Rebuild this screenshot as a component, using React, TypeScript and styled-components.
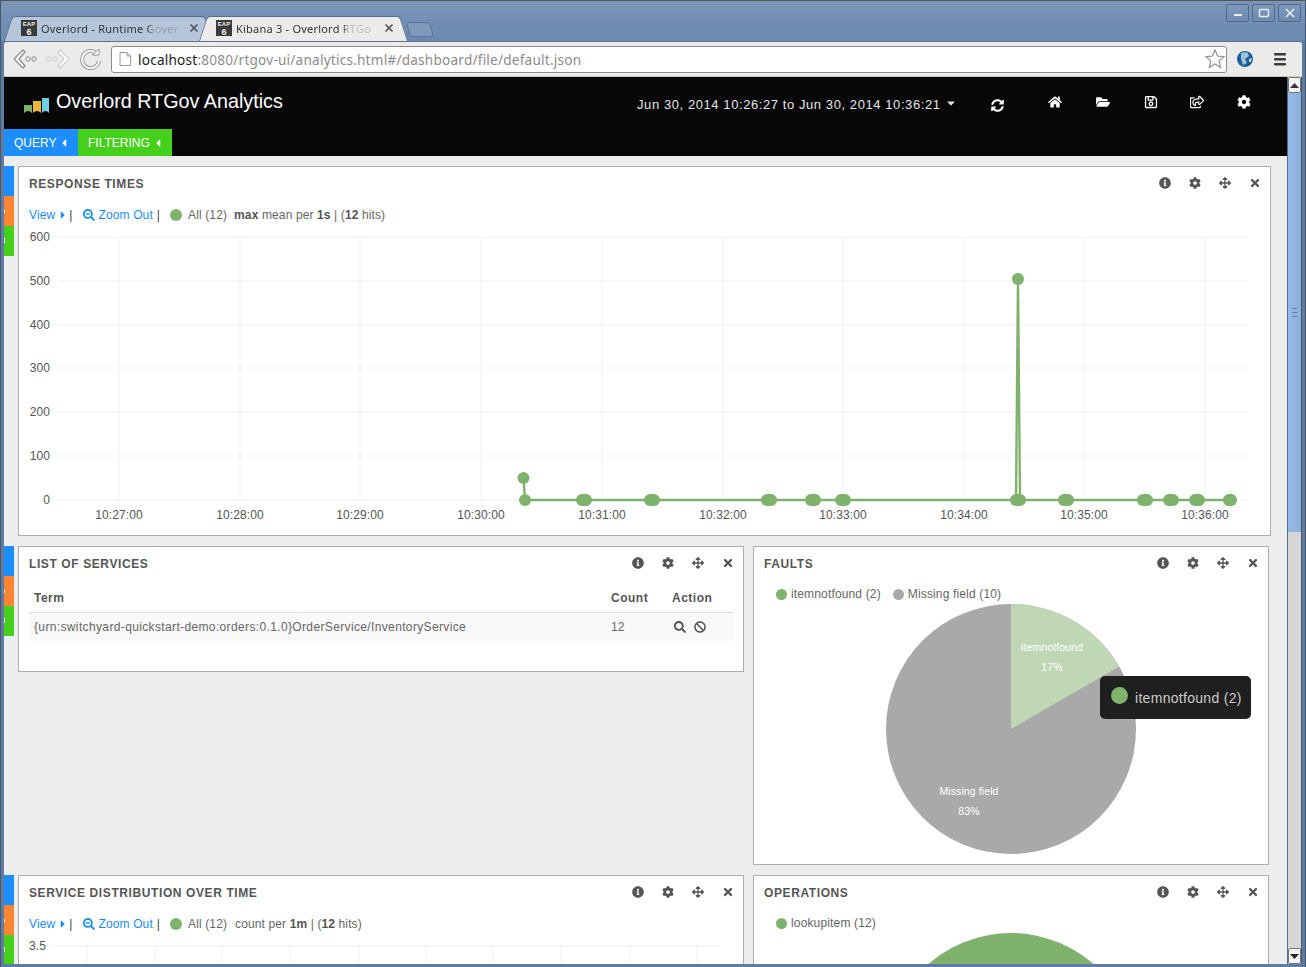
import React from "react";
import styled, { createGlobalStyle } from "styled-components";
import {
  FaInfoCircle, FaCog, FaArrowsAlt, FaTimes, FaSearchMinus, FaCaretRight, FaCaretLeft, FaCaretDown,
  FaSyncAlt, FaHome, FaFolderOpen, FaRegSave, FaRegShareSquare, FaSearch, FaBan,
} from "react-icons/fa";

const Global = createGlobalStyle`
  html, body { margin: 0; padding: 0; height: 100%; overflow: hidden; }
  body { font-family: "Liberation Sans", Arial, sans-serif; font-size: 12px; color: #555; }
  * { box-sizing: border-box; }
`;

const Win = styled.div`
  width: 1306px; height: 967px; display: flex; flex-direction: column;
  background: #5f7da3; border: 1px solid #47566b; border-top-color: #555; border-bottom: none;
  padding: 0 3px 3px 3px; overflow: hidden;
`;
const TitleBar = styled.div`
  height: 40px; margin: 0 -3px; padding: 0 3px; flex: none; display: flex; align-items: flex-end; position: relative;
  background: linear-gradient(#7a95b8, #6b89ae);
`;
const TabStrip = styled.div`
  display: flex; gap: 6px; align-items: flex-end; padding-left: 10px; flex: 1;
`;
const Tab = styled.div<{ $active?: boolean }>`
  position: relative; width: 189px; height: 25px; display: flex; align-items: center; padding: 0 4px 2px 7px;
  background: ${p => (p.$active ? "#ecebe9" : "#b6c6da")}; z-index: ${p => (p.$active ? 2 : 1)};
  border-top: 1px solid #566d8c; border-radius: 4px 4px 0 0;
  color: #333; font-family: "Noto Sans", sans-serif; font-size: 11px;
  &::before, &::after {
    content: ""; position: absolute; top: -1px; bottom: 0; width: 14px; background: inherit;
    border-top: 1px solid #566d8c;
  }
  &::before { left: -6px; transform: skewX(-18deg); border-left: 1px solid #566d8c; border-radius: 4px 0 0 0; z-index: -1; }
  &::after { right: -6px; transform: skewX(18deg); border-right: 1px solid #566d8c; border-radius: 0 4px 0 0; z-index: -1; }
`;
const Favicon = styled.span`
  width: 16px; height: 16px; flex: none; background: #3a3a3a; color: #eee; display: flex; flex-direction: column;
  align-items: center; font: bold 6px/7px "Liberation Sans", sans-serif; padding-top: 1px;
  b { font-size: 9px; line-height: 8px; }
`;
const TabText = styled.span`
  flex: 1; white-space: nowrap; margin-left: 4px; letter-spacing: .22px;
  mask-image: linear-gradient(to right, #000 72%, rgba(0,0,0,.25) 76%);
`;
const TabClose = styled.svg`
  flex: none; width: 10px; height: 10px;
`;
const NewTab = styled.div`
  width: 24px; height: 15px; margin: 0 0 4px 4px; background: #7d9abc; border: 1px solid #5a7496;
  border-radius: 3px 5px 3px 3px; transform: skewX(14deg);
`;
const WinButtons = styled.div`
  position: absolute; top: 3px; right: 4px; display: flex; gap: 3px;
`;
const WinBtn = styled.div`
  width: 23px; height: 18px; border: 1px solid #50698a; border-radius: 2px;
  background: linear-gradient(#7d98bb, #6d8bb0); display: flex; align-items: center; justify-content: center;
`;
const Toolbar = styled.div`
  height: 36px; flex: none; background: #ecebe9; display: flex; align-items: center;
  border-radius: 3px 3px 0 0; border-top: 1px solid #5a7496; border-bottom: 1px solid #c6c6c6;
  padding-left: 8px;
`;
const NavIcon = styled.svg<{ $flip?: boolean }>`
  width: 26px; height: 24px; flex: none; margin-right: 7px;
  transform: ${p => (p.$flip ? "scaleX(-1)" : "none")};
`;
const UrlBar = styled.div`
  width: 1116px; height: 27px; background: #fff; border: 1px solid #8a8a8a; border-radius: 3px;
  display: flex; align-items: center; padding: 0 1px 0 7px; font: 13.6px "Noto Sans", sans-serif; color: #8b8b8b;
  b { font-weight: 400; color: #222; }
`;
const UrlText = styled.span` flex: 1; margin-left: 7px; white-space: nowrap; letter-spacing: .22px; `;
const Globe = styled.svg` width: 18px; height: 18px; margin-left: 9px; flex: none; `;
const Menu = styled.svg` width: 14px; height: 14px; margin-left: 19px; flex: none; `;
const Body = styled.div` flex: 1; min-height: 0; display: flex; `;
const Page = styled.div`
  width: 1283px; background: #ededed; display: flex; flex-direction: column; overflow: hidden;
`;
const Scrollbar = styled.div`
  flex: 1; display: flex; flex-direction: column; background: #d6d6d6; border-left: 1px solid #4f6a8c; border-right: 1px solid #47566b;
`;
const ScrollBtn = styled.div`
  height: 16px; flex: none; background: #f4f4f4; border: 1px solid #777; border-radius: 2px; display: flex;
  align-items: center; justify-content: center;
`;
const Thumb = styled.div`
  height: 439px; flex: none; background: linear-gradient(to right, #97b9e6, #8cafdb); display: flex; align-items: center; justify-content: center;
  &::after {
    content: ""; width: 5px; height: 7px; border-top: 1px solid #5f7da3; border-bottom: 1px solid #5f7da3;
    background: linear-gradient(#5f7da3, #5f7da3) center / 100% 1px no-repeat;
  }
`;
const ScrollTrack = styled.div` flex: 1; `;
const TopBar = styled.div` background: #070707; height: 79px; flex: none; display: flex; flex-direction: column; `;
const BrandRow = styled.div` height: 52px; flex: none; display: flex; align-items: center; color: #fff; padding-left: 20px; `;
const Logo = styled.svg` width: 26px; height: 16px; flex: none; margin-top: 4px; `;
const Brand = styled.span` font-size: 19.75px; margin: -4px 0 0 6px; width: 581px; white-space: nowrap; `;
const TimeRange = styled.span`
  font-size: 13px; letter-spacing: .58px; white-space: nowrap; color: #e4e4e4; display: flex; align-items: center; gap: 4px;
  margin-top: 3px; width: 336px;
`;
const TimeCaret = styled(FaCaretDown)` margin-top: -3px; `;
const NavBtn = styled.span<{ $ml?: number; $mt?: number }>`
  width: 48px; flex: none; display: flex; justify-content: center; color: #fff; font-size: 14px;
  margin-left: ${p => p.$ml ?? 0}px; margin-top: ${p => p.$mt ?? -3}px;
`;
const SubRow = styled.div` height: 27px; display: flex; `;
const SubTab = styled.div<{ $bg: string; $w: number }>`
  width: ${p => p.$w}px; background: ${p => p.$bg}; color: #fff; display: flex; align-items: center; padding-left: 10px; gap: 2px; font-size: 12px;
`;
const Rows = styled.div` padding-top: 10px; display: flex; flex-direction: column; gap: 10px; `;
const Row = styled.div` display: flex; align-items: flex-start; `;
const Strips = styled.div` width: 10px; margin-right: 4px; flex: none; display: flex; flex-direction: column; `;
const Strip = styled.div<{ $c: string }>` height: 30px; background: ${p => p.$c}; position: relative; `;
const StripMark = styled.span<{ $t: number; $h: number }>`
  position: absolute; left: 0; top: ${p => p.$t}px; width: 1px; height: ${p => p.$h}px; background: #fff;
`;
const Panels = styled.div` display: flex; gap: 9px; `;
const Panel = styled.div<{ $w: number; $h: number }>`
  position: relative; width: ${p => p.$w}px; height: ${p => p.$h}px; background: #fff; border: 1px solid #adadad; flex: none; overflow: hidden;
`;
const PanelHead = styled.div` height: 33px; display: flex; align-items: center; justify-content: space-between; padding-left: 10px; `;
const Title = styled.h3`
  margin: 0; font-size: 12px; font-weight: bold; letter-spacing: .6px; color: #555; text-transform: uppercase;
`;
const Tools = styled.div` display: flex; color: #555; font-size: 12px; margin-top: -1px; `;
const Tool = styled.span` width: 30px; display: flex; justify-content: center; `;
const ChartLegend = styled.div`
  height: 28px; padding: 1px 0 0 10px; display: flex; align-items: center; white-space: nowrap; color: #666; font-size: 12px; letter-spacing: .12px;
  b { color: #555; }
`;
const Link = styled.span` color: #1a8cff; display: inline-flex; align-items: center; gap: 4px; `;
const Caret = styled(FaCaretRight)` margin-left: -2px; `;
const Sep = styled.span<{ $l: number; $m: number }>` margin: 0 ${p => p.$m}px 0 ${p => p.$l}px; color: #444; `;
const Dot = styled.span<{ $s: number; $c: string; $ml?: number }>`
  width: ${p => p.$s}px; height: ${p => p.$s}px; border-radius: 50%; background: ${p => p.$c}; flex: none; display: inline-block;
  margin-left: ${p => p.$ml ?? 0}px;
`;
const AllLabel = styled.span<{ $mr: number }>` margin: 0 ${p => p.$mr}px 0 6px; `;
const PieLegend = styled.div`
  height: 24px; padding: 4px 0 0 22px; display: flex; align-items: center; gap: 4px; color: #666; font-size: 12px; letter-spacing: .15px; white-space: nowrap;
`;
const Plot = styled.svg` display: block; `;
const AxisText = styled.text` font-size: 12px; fill: #555; font-family: "Liberation Sans", sans-serif; letter-spacing: .1px; `;
const SliceText = styled.text` font-size: 10.5px; fill: #fff; text-anchor: middle; letter-spacing: .1px; font-family: "Liberation Sans", sans-serif; `;
const Table = styled.table`
  border-collapse: collapse; margin: 0 10px; width: 704px; table-layout: fixed; font-size: 12px; color: #666;
`;
const Th = styled.th<{ $w: number }>`
  width: ${p => p.$w}px; text-align: left; font-weight: bold; color: #555; height: 32px; padding: 4px 0 0 5px; border-bottom: 1px solid #ddd; letter-spacing: .5px;
`;
const Td = styled.td<{ $wide?: boolean }>`
  height: 29px; background: #f9f9f9; padding: 1px 0 0 5px; white-space: nowrap; letter-spacing: ${p => (p.$wide ? ".36px" : "0")};
`;
const Actions = styled.span` display: flex; gap: 8px; color: #555; padding-left: 2px; font-size: 12px; `;
const Tooltip = styled.div`
  position: absolute; left: 346px; top: 129px; width: 151px; height: 43px; background: #1f1f1f; border-radius: 5px; color: #ccc;
  display: flex; align-items: center; gap: 7px; padding-left: 11px; font-size: 14px; letter-spacing: .3px; white-space: nowrap;
  ${Dot} { margin-bottom: 5px; }
`;

const C = { blue: "#1c8eff", orange: "#ff8533", green: "#45d11b", line: "#7eb26d", grid: "#f1f1f1" };

const Bars = () => (
  <Strips>
    <Strip $c={C.blue} />
    <Strip $c={C.orange}><StripMark $t={14} $h={3} /></Strip>
    <Strip $c={C.green}><StripMark $t={12} $h={5} /></Strip>
  </Strips>
);

const PanelTools = () => (
  <Tools>
    <Tool><FaInfoCircle /></Tool>
    <Tool><FaCog /></Tool>
    <Tool><FaArrowsAlt /></Tool>
    <Tool><FaTimes /></Tool>
  </Tools>
);

const HistoLegend = ({ label, per, gapMax }: { label: React.ReactNode; per: string; gapMax: number }) => (
  <ChartLegend>
    <Link>View <Caret size={12} /></Link>
    <Sep $l={0} $m={10}>|</Sep>
    <Link><FaSearchMinus size={12} /> Zoom Out</Link>
    <Sep $l={4} $m={10}>|</Sep>
    <Dot $s={12} $c={C.line} />
    <AllLabel $mr={gapMax}>All (12)</AllLabel>
    {label}
    <span>&nbsp;per <b>{per}</b> | (<b>12</b> hits)</span>
  </ChartLegend>
);

const mainVert = [119, 240, 360, 481, 602, 723, 843, 964, 1084, 1205];
const mainHoriz = [500, 456, 412, 368, 325, 281, 237];
const mainXLabels = ["10:27:00", "10:28:00", "10:29:00", "10:30:00", "10:31:00", "10:32:00", "10:33:00", "10:34:00", "10:35:00", "10:36:00"];
const pts = [525, 582, 584, 586, 650, 652, 654, 767, 769, 771, 811, 813, 815, 841, 843, 845, 1016, 1018, 1020, 1064, 1066, 1068, 1143, 1145, 1147, 1169, 1171, 1173, 1195, 1197, 1199, 1229, 1231];

const MainChart = () => (
  <Plot width={1251} height={307} viewBox="19 228 1251 307">
    {mainHoriz.map(y => <line key={y} x1={57} x2={1248} y1={y} y2={y} stroke={C.grid} />)}
    {mainVert.map(x => <line key={x} x1={x} x2={x} y1={237} y2={500} stroke={C.grid} />)}
    {mainHoriz.map((y, i) => <AxisText key={y} x={50} y={y + 4} textAnchor="end">{i * 100}</AxisText>)}
    {mainVert.map((x, i) => <AxisText key={x} x={x} y={519} textAnchor="middle">{mainXLabels[i]}</AxisText>)}
    <polyline fill="none" stroke={C.line} strokeWidth={2.4}
      points="523.5,478 525,500 1016,500 1018,279 1020,500 1230,500" />
    <circle cx={523.5} cy={478} r={6} fill={C.line} />
    <circle cx={1018} cy={279} r={6} fill={C.line} />
    {pts.map(x => <circle key={x} cx={x} cy={500} r={6} fill={C.line} />)}
  </Plot>
);

const smallVert = [87, 155, 222, 290, 359, 426, 493, 561, 630, 697];
const SmallChart = () => (
  <Plot width={724} height={60} viewBox="19 937 724 60">
    <line x1={51} x2={721} y1={946} y2={946} stroke={C.grid} />
    {smallVert.map(x => <line key={x} x1={x} x2={x} y1={946} y2={997} stroke={C.grid} />)}
    <AxisText x={46} y={950} textAnchor="end">3.5</AxisText>
  </Plot>
);

const FaultsPie = () => (
  <Plot width={514} height={260} viewBox="754 604 514 260">
    <circle cx={1011} cy={729} r={125} fill="#a9a9a9" />
    <path d="M1011 729 L1011 604 A125 125 0 0 1 1119.3 666.5 Z" fill="#bfd7b5" />
    <SliceText x={1052} y={651}>itemnotfound</SliceText>
    <SliceText x={1052} y={671}>17%</SliceText>
    <SliceText x={969} y={795}>Missing field</SliceText>
    <SliceText x={969} y={815}>83%</SliceText>
  </Plot>
);

const OpsPie = () => (
  <Plot width={514} height={60} viewBox="754 933 514 60">
    <circle cx={1011} cy={1058} r={125} fill={C.line} />
  </Plot>
);

const ChromeArrow = ({ flip, color }: { flip?: boolean; color: string }) => (
  <NavIcon viewBox="0 0 26 24" $flip={flip}>
    <path d="M11 3 L2 12 L11 21 L13 19 L7 12 L13 5 Z" fill="#fff" stroke={color} strokeWidth={1.2} strokeLinejoin="round" />
    <circle cx={16} cy={12} r={2.2} fill="none" stroke={color} />
    <circle cx={22} cy={12} r={2.2} fill="none" stroke={color} />
  </NavIcon>
);

const CloseX = () => (
  <TabClose viewBox="0 0 10 10"><path d="M1.5 1.5 L8.5 8.5 M8.5 1.5 L1.5 8.5" stroke="#555" strokeWidth="1.7" /></TabClose>
);

export default function App() {
  return (
    <>
      <Global />
      <Win>
        <TitleBar>
          <TabStrip>
            <Tab>
              <Favicon>EAP<b>6</b></Favicon>
              <TabText>Overlord - Runtime Gover</TabText>
              <CloseX />
            </Tab>
            <Tab $active>
              <Favicon>EAP<b>6</b></Favicon>
              <TabText>Kibana 3 - Overlord RTGo</TabText>
              <CloseX />
            </Tab>
            <NewTab />
          </TabStrip>
          <WinButtons>
            <WinBtn><svg width="12" height="12" viewBox="0 0 12 12"><rect x="2" y="7" width="8" height="2" fill="#e8edf3" /></svg></WinBtn>
            <WinBtn><svg width="12" height="12" viewBox="0 0 12 12"><rect x="1.5" y="2.5" width="9" height="7" rx="1" fill="none" stroke="#e8edf3" strokeWidth="1.4" /></svg></WinBtn>
            <WinBtn><svg width="12" height="12" viewBox="0 0 12 12"><path d="M2 2 L10 10 M10 2 L2 10" stroke="#e8edf3" strokeWidth="1.6" /></svg></WinBtn>
          </WinButtons>
        </TitleBar>
        <Toolbar>
          <ChromeArrow color="#8a8a8a" />
          <ChromeArrow flip color="#cfcfcf" />
          <NavIcon viewBox="0 0 26 24">
            <path d="M19 7 A8.5 8.5 0 1 0 21 14" fill="none" stroke="#9a9a9a" strokeWidth={4} />
            <path d="M19 7 A8.5 8.5 0 1 0 21 14" fill="none" stroke="#f6f6f6" strokeWidth={2} />
            <path d="M14 8 L21 8 L21 2 Z" fill="#f6f6f6" stroke="#9a9a9a" />
          </NavIcon>
          <UrlBar>
            <svg width="12" height="14" viewBox="0 0 12 14"><path d="M1 .5 H8 L11.5 4 V13.5 H1 Z M8 .5 V4 H11.5" fill="#fff" stroke="#999" /></svg>
            <UrlText><b>localhost</b>:8080/rtgov-ui/analytics.html#/dashboard/file/default.json</UrlText>
            <svg width="20" height="20" viewBox="0 0 20 20"><polygon points="10,1 12.6,7 19,7.6 14.2,11.9 15.6,18.5 10,15 4.4,18.5 5.8,11.9 1,7.6 7.4,7" fill="#fff" stroke="#8f8f8f" strokeWidth="1.2" /></svg>
          </UrlBar>
          <Globe viewBox="0 0 18 18">
            <circle cx="9" cy="9" r="8" fill="#1c5f96" />
            <path d="M5 3 L11 2 L13 6 L9 9 L11 13 L7 15 L5 9 Z" fill="#9fc3d8" />
            <path d="M13 9 L16 8 L15 12 L13 12 Z" fill="#b9d2e2" />
          </Globe>
          <Menu viewBox="0 0 14 14">
            <rect x="1" y="1" width="12" height="2.6" rx="1" fill="#3b3b3b" />
            <rect x="1" y="6" width="12" height="2.6" rx="1" fill="#3b3b3b" />
            <rect x="1" y="11" width="12" height="2.6" rx="1" fill="#3b3b3b" />
          </Menu>
        </Toolbar>
        <Body>
          <Page>
            <TopBar>
              <BrandRow>
                <Logo viewBox="0 0 26 16">
                  <path d="M0 8 H8 V16 Q4 12 0 16 Z" fill="#7eb26d" />
                  <path d="M9 4 H17 V16 Q13 12 9 16 Z" fill="#eab839" />
                  <path d="M18 1 H25 V16 Q21.5 12 18 16 Z" fill="#6ed0e0" />
                </Logo>
                <Brand>Overlord RTGov Analytics</Brand>
                <TimeRange>Jun 30, 2014 10:26:27 to Jun 30, 2014 10:36:21 <TimeCaret size={12} /></TimeRange>
                <NavBtn $mt={4}><FaSyncAlt size={13} /></NavBtn>
                <NavBtn $ml={10}><FaHome /></NavBtn>
                <NavBtn><FaFolderOpen /></NavBtn>
                <NavBtn><FaRegSave /></NavBtn>
                <NavBtn $ml={-2}><FaRegShareSquare /></NavBtn>
                <NavBtn $ml={-1}><FaCog /></NavBtn>
              </BrandRow>
              <SubRow>
                <SubTab $bg={C.blue} $w={74}>QUERY <FaCaretLeft size={12} /></SubTab>
                <SubTab $bg={C.green} $w={94}>FILTERING <FaCaretLeft size={12} /></SubTab>
              </SubRow>
            </TopBar>
            <Rows>
              <Row>
                <Bars />
                <Panel $w={1253} $h={370}>
                  <PanelHead><Title>Response Times</Title><PanelTools /></PanelHead>
                  <HistoLegend gapMax={7} per="1s" label={<span><b>max</b> mean</span>} />
                  <MainChart />
                </Panel>
              </Row>
              <Row>
                <Bars />
                <Panels>
                  <Panel $w={726} $h={126}>
                    <PanelHead><Title>List of Services</Title><PanelTools /></PanelHead>
                    <Table>
                      <thead><tr><Th $w={577}>Term</Th><Th $w={61}>Count</Th><Th $w={66}>Action</Th></tr></thead>
                      <tbody><tr>
                        <Td $wide>{"{urn:switchyard-quickstart-demo:orders:0.1.0}OrderService/InventoryService"}</Td>
                        <Td>12</Td>
                        <Td><Actions><FaSearch /><FaBan /></Actions></Td>
                      </tr></tbody>
                    </Table>
                  </Panel>
                  <Panel $w={516} $h={319}>
                    <PanelHead><Title>Faults</Title><PanelTools /></PanelHead>
                    <PieLegend>
                      <Dot $s={11} $c={C.line} /> itemnotfound (2)
                      <Dot $s={11} $c="#a9a9a9" $ml={8} /> Missing field (10)
                    </PieLegend>
                    <FaultsPie />
                    <Tooltip><Dot $s={17} $c={C.line} /> itemnotfound (2)</Tooltip>
                  </Panel>
                </Panels>
              </Row>
              <Row>
                <Bars />
                <Panels>
                  <Panel $w={726} $h={200}>
                    <PanelHead><Title>Service Distribution Over Time</Title><PanelTools /></PanelHead>
                    <HistoLegend gapMax={8} per="1m" label={<span>count</span>} />
                    <SmallChart />
                  </Panel>
                  <Panel $w={516} $h={200}>
                    <PanelHead><Title>Operations</Title><PanelTools /></PanelHead>
                    <PieLegend><Dot $s={11} $c={C.line} /> lookupitem (12)</PieLegend>
                    <OpsPie />
                  </Panel>
                </Panels>
              </Row>
            </Rows>
          </Page>
          <Scrollbar>
            <ScrollBtn><svg width="9" height="5" viewBox="0 0 9 5"><path d="M0 5 L4.5 0 L9 5 Z" fill="#333" /></svg></ScrollBtn>
            <Thumb />
            <ScrollTrack />
            <ScrollBtn><svg width="9" height="5" viewBox="0 0 9 5"><path d="M0 0 L4.5 5 L9 0 Z" fill="#222" /></svg></ScrollBtn>
          </Scrollbar>
        </Body>
      </Win>
    </>
  );
}
